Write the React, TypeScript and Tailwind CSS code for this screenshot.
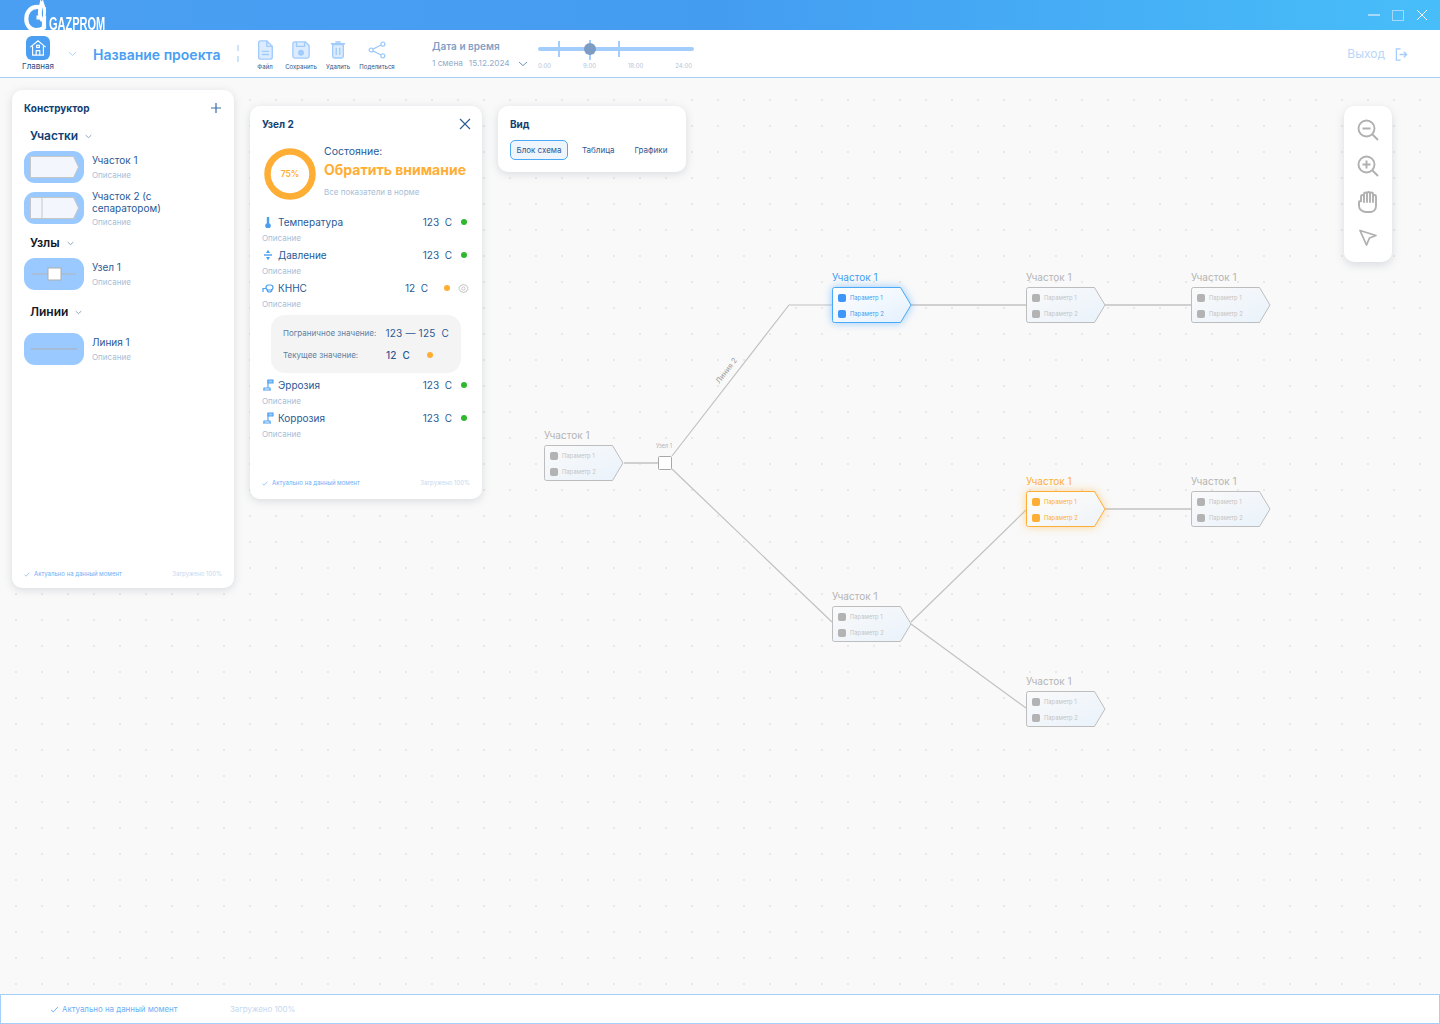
import React from "react";

const F = { fontFamily: "Inter, 'Noto Sans', sans-serif" };

function Chevron({ className = "" }: { className?: string }) {
  return (
    <svg viewBox="0 0 10 6" className={className} fill="none" stroke="currentColor" strokeWidth="1">
      <path d="M1 1l4 3.600L9 1" />
    </svg>
  );
}

function Check({ className = "" }: { className?: string }) {
  return (
    <svg viewBox="0 0 10 8" className={className} fill="none" stroke="currentColor" strokeWidth="1.100">
      <path d="M1 4.400l2.600 2.400L9 1" />
    </svg>
  );
}

function Logo() {
  return (
    <div className="flex items-start h-[30px] ml-6 w-[90px]">
      <svg viewBox="0 0 26 30" className="w-[26px] h-[30px] shrink-0">
        <path d="M21 9.500C18.500 7.500 16 6.800 13.500 6.800 6.500 6.800 2.300 12 2.300 19c0 6.500 4 11 9.700 11 3 0 6-.8 8-2.500V17.500h-7.500" fill="none" stroke="#fff" strokeWidth="4.200" />
        <path d="M17 22c-1.800-3-3.500-6-3-11 .3-4 1.800-7 2.300-11h.7c.3 1 .5 1.500.8 1.500.2 0 .4-.8.6-1.500h.7c.8 4 2.800 7 3 11 .2 5-2.500 8.500-5.100 11z" fill="#fff" />
        <path d="M18.600 18c-1-3-1-7-.2-11 .6 4 1 8 .2 11z" fill="#4a9ff0" />
      </svg>
      <span className="text-white font-bold text-[11px] leading-[8px] h-[8px] mt-[15.500px] -ml-[1px] origin-top-left scale-y-[1.750] whitespace-nowrap" style={{ fontFamily: "'Liberation Sans', sans-serif" }}>
        GAZPROM
      </span>
    </div>
  );
}

function TopBar() {
  return (
    <div className="h-[30px] shrink-0 flex items-start justify-between overflow-hidden bg-gradient-to-r from-[#4a9ff2] via-[#449cf1] to-[#47bef9]">
      <Logo />
      <div className="flex items-center h-[30px]">
        <div className="w-[12px] h-[1.500px] bg-[#a5d8fb] mr-[12px]" />
        <div className="w-[12px] h-[11px] border-[1.500px] border-[#a5d8fb] mr-[12px]" />
        <svg viewBox="0 0 12 12" className="w-[12px] h-[12px] mr-[12px]" stroke="#fff" strokeWidth="1" fill="none">
          <path d="M1 1l10 10M11 1L1 11" />
        </svg>
      </div>
    </div>
  );
}

function ToolIcon({ kind }: { kind: string }) {
  const c = "#a0cbfb";
  if (kind === "file")
    return (
      <svg viewBox="0 0 18 22" className="w-[18px] h-[20px]" fill="#dcecfe" stroke={c} strokeWidth="1.500">
        <path d="M2 3a2 2 0 0 1 2-2h7l6 6v12a2 2 0 0 1-2 2H4a2 2 0 0 1-2-2z" />
        <path d="M11 1v6h6M5.500 12.500h8M5.500 16h8" fill="none" />
      </svg>
    );
  if (kind === "save")
    return (
      <svg viewBox="0 0 20 20" className="w-[18px] h-[18px]" fill="#dcecfe" stroke={c} strokeWidth="1.500">
        <path d="M1 3a2 2 0 0 1 2-2h12l4 4v12a2 2 0 0 1-2 2H3a2 2 0 0 1-2-2z" />
        <path d="M5 1v5h9V1" fill="none" />
        <circle cx="10" cy="13" r="2.500" fill={c} />
      </svg>
    );
  if (kind === "del")
    return (
      <svg viewBox="0 0 18 20" className="w-[16px] h-[18px]" fill="#dcecfe" stroke={c} strokeWidth="1.500">
        <path d="M3 4h12v13a2 2 0 0 1-2 2H5a2 2 0 0 1-2-2z" />
        <path d="M1 3h16M6 1h6M7 7.500v8M11 7.500v8" fill="none" />
      </svg>
    );
  return (
    <svg viewBox="0 0 20 20" className="w-[18px] h-[18px]" fill="none" stroke={c} strokeWidth="1.400">
      <circle cx="16.500" cy="3.500" r="2.200" />
      <circle cx="3.500" cy="10" r="2.200" />
      <circle cx="16.500" cy="16.500" r="2.200" />
      <path d="M5.500 9l9-4.500M5.500 11l9 4.500" />
    </svg>
  );
}

function Tool({ kind, label, w }: { kind: string; label: string; w: string }) {
  return (
    <div className={`flex flex-col items-center ${w}`}>
      <div className="h-[22px] flex items-center justify-center">
        <ToolIcon kind={kind} />
      </div>
      <span className="text-[6px] leading-[8px] mt-[2px] text-[#2c5687] whitespace-nowrap">{label}</span>
    </div>
  );
}

function Slider() {
  return (
    <div className="ml-[9px] w-[156px] mt-[11px]">
      <div className="relative h-[16px]">
        <div className="absolute left-0 right-0 top-[6px] h-[4px] rounded-full bg-[#a3cdfc]" />
        <div className="absolute left-[20px] top-0 w-[2px] h-[16px] bg-[#a3cdfc]" />
        <div className="absolute left-[80px] top-0 w-[2px] h-[16px] bg-[#a3cdfc]" />
        <div className="absolute left-[51px] top-[-1px] w-[2px] h-[20px] bg-[#a3cdfc]" />
        <div className="absolute left-[46px] top-[2px] w-[12px] h-[12px] rounded-full bg-[#7c9cc4]" />
      </div>
      <div className="flex justify-between w-[154px] mt-[5px] text-[6px] leading-[8px] text-[#b3c6dc]">
        <span>0:00</span>
        <span>9:00</span>
        <span>18:00</span>
        <span>24:00</span>
      </div>
    </div>
  );
}

function Toolbar() {
  return (
    <div className="h-[48px] shrink-0 flex items-start bg-white border-b border-[#a8d0f5] relative">
      <div className="ml-[20px] w-[36px] flex flex-col items-center mt-[6px]">
        <div className="w-[24px] h-[24px] rounded-[6px] bg-[#4a9ff2] flex items-center justify-center">
          <svg viewBox="0 0 20 20" className="w-[18px] h-[18px]" fill="none" stroke="#fff" strokeWidth="1.300">
            <path d="M1.500 9L10 2l8.500 7M4 8v10h12V8M8 18v-5h4v5" />
            <rect x="8.500" y="7" width="3" height="2.500" />
          </svg>
        </div>
        <span className="text-[8px] leading-[9px] mt-[2px] text-[#1f4e86] whitespace-nowrap">Главная</span>
      </div>
      <Chevron className="w-[9px] h-[6px] ml-[12px] mt-[21px] text-[#a3cdfc] shrink-0" />
      <span className="ml-[16px] mt-[16px] text-[14px] leading-[18px] font-semibold text-[#4a9ff2] whitespace-nowrap w-[129px]">Название проекта</span>
      <div className="ml-[15px] mt-[15px] h-[17px] border-l-2 border-dashed border-[#cfe3fb]" />
      <div className="flex ml-[8px] mt-[9px]">
        <Tool kind="file" label="Файл" w="w-[36px]" />
        <Tool kind="save" label="Сохранить" w="w-[36px]" />
        <Tool kind="del" label="Удалить" w="w-[38px]" />
        <Tool kind="share" label="Поделиться" w="w-[40px]" />
      </div>
      <div className="ml-[35px] mt-[10px] w-[97px]">
        <div className="text-[10px] leading-[12px] font-semibold text-[#7f9fc6] whitespace-nowrap">Дата и время</div>
        <div className="flex items-center mt-[6px] text-[8.200px] leading-[11px] text-[#8fadcd] whitespace-nowrap">
          <span>1 смена</span>
          <span className="ml-[6px]">15.12.2024</span>
          <Chevron className="w-[10px] h-[6px] ml-[8px] text-[#6f93bd] shrink-0" />
        </div>
      </div>
      <Slider />
      <div className="ml-auto mr-[32px] mt-[16px] flex items-center">
        <span className="text-[12px] leading-[16px] text-[#b8d6f8]">Выход</span>
        <svg viewBox="0 0 14 14" className="w-[13px] h-[13px] ml-[10px]" fill="none" stroke="#a3cdfc" strokeWidth="1.400">
          <path d="M6 1H1.500v12H6M5 7h7.500M9.500 4l3 3-3 3" />
        </svg>
      </div>
    </div>
  );
}

function Thumb({ kind }: { kind: string }) {
  return (
    <div className="w-[60px] h-[32px] shrink-0 rounded-[11px] bg-[#99c9ff] flex items-center justify-center">
      <svg viewBox="0 0 60 32" className="w-[60px] h-[32px]">
        {(kind === "a" || kind === "b") && (
          <>
            <path d="M6.500 5.500h43l5 10.500-5 10.500h-43z" fill="#f3f7fd" stroke="#c7c7c7" />
            {kind === "b" && <path d="M18 5.500v21" stroke="#c7c7c7" />}
          </>
        )}
        {kind === "n" && (
          <>
            <path d="M8 16h44" stroke="#b5b5b5" />
            <rect x="24" y="10" width="13" height="12" fill="#fff" stroke="#adadad" />
          </>
        )}
        {kind === "l" && <path d="M7 16h46" stroke="#b0b0b0" strokeWidth="1.200" />}
      </svg>
    </div>
  );
}

function Group({ title, children, cls, black }: { title: string; children: React.ReactNode; cls: string; black?: boolean }) {
  return (
    <div className={cls}>
      <div className="flex items-center pl-[6px] h-[16px]">
        <span className={`text-[12px] font-semibold leading-[16px] ${black ? "text-[#111827]" : "text-[#123f73]"}`}>{title}</span>
        <Chevron className="w-[7px] h-[5px] ml-[7px] text-[#5f83ad]" />
      </div>
      {children}
    </div>
  );
}

function Item({ kind, title, cls = "", textCls = "pt-[3px]", descCls = "mt-[4px]" }: { kind: string; title: React.ReactNode; cls?: string; textCls?: string; descCls?: string }) {
  return (
    <div className={`flex ${cls}`}>
      <Thumb kind={kind} />
      <div className={`ml-[8px] ${textCls}`}>
        <div className="text-[10px] leading-[12px] text-[#2a5a96]">{title}</div>
        <div className={`text-[8px] leading-[10px] ${descCls} text-[#a8bdd8]`}>Описание</div>
      </div>
    </div>
  );
}

function PanelFooter() {
  return (
    <div className="flex items-center justify-between text-[6px] leading-[8px]">
      <div className="flex items-center text-[#6cb0f8]">
        <Check className="w-[6px] h-[5px] mr-[4px]" />
        Актуально на данный момент
      </div>
      <span className="text-[#c6d8ee]">Загружено 100%</span>
    </div>
  );
}

function Constructor() {
  return (
    <div className="w-[222px] h-[498px] shrink-0 mt-[12px] rounded-[10px] bg-white shadow-[0_2px_8px_rgba(120,130,150,0.25)] px-[12px] relative flex flex-col">
      <div className="flex items-center justify-between h-[16px] mt-[10px]">
        <span className="text-[10px] font-bold text-[#123f73]">Конструктор</span>
        <svg viewBox="0 0 10 10" className="w-[10px] h-[10px] mr-[1px]" stroke="#3a6ba5" strokeWidth="1.200">
          <path d="M5 0v10M0 5h10" />
        </svg>
      </div>
      <Group title="Участки" cls="mt-[12px]">
        <Item kind="a" title="Участок 1" cls="mt-[7px]" />
        <Item kind="b" title={<>Участок 2 (с<br />сепаратором)</>} cls="mt-[9px]" textCls="-mt-[2px]" descCls="mt-[3px]" />
      </Group>
      <Group title="Узлы" cls="mt-[8px]" black>
        <Item kind="n" title="Узел 1" cls="mt-[7px]" />
      </Group>
      <Group title="Линии" cls="mt-[14px]" black>
        <Item kind="l" title="Линия 1" cls="mt-[13px]" />
      </Group>
      <div className="mt-auto mb-[10px]">
        <PanelFooter />
      </div>
    </div>
  );
}

function RowIcon({ kind }: { kind: string }) {
  if (kind === "t")
    return (
      <svg viewBox="0 0 10 12" className="w-[10px] h-[12px]">
        <path d="M3.800 1h2.400v6.200a2.800 2.800 0 1 1-2.400 0z" fill="#4a9ff2" />
      </svg>
    );
  if (kind === "p")
    return (
      <svg viewBox="0 0 10 12" className="w-[10px] h-[12px]" fill="#4a9ff2">
        <rect x="1" y="5.300" width="8" height="1.400" />
        <path d="M5 .8L7 4H3zM5 11.200L3 8h4z" />
      </svg>
    );
  if (kind === "k")
    return (
      <svg viewBox="0 0 12 10" className="w-[12px] h-[10px]" fill="none" stroke="#4a9ff2" strokeWidth="1.200">
        <path d="M1 9V5.500h3M5 6.500a2.500 2.500 0 1 0 5 0" />
        <rect x="4" y="2" width="7" height="5" rx="2.500" />
      </svg>
    );
  return (
    <svg viewBox="0 0 12 12" className="w-[12px] h-[12px]" fill="none" stroke="#4a9ff2" strokeWidth="1.100">
      <path d="M6 1v8" />
      <path d="M6 1h5v3H6z" fill="#9dcafb" />
      <path d="M1 11h8M2 9h6v2H2z" />
    </svg>
  );
}

function Row({ icon, name, val, dot, gear }: { icon: string; name: string; val: string; dot: string; gear?: boolean }) {
  return (
    <div className="h-[33px]">
      <div className="flex items-center h-[14px]">
        <div className="w-[12px] flex justify-center shrink-0">
          <RowIcon kind={icon} />
        </div>
        <span className="ml-[4px] text-[10px] leading-[14px] text-[#2a5a96]">{name}</span>
        <span className={`ml-auto text-[10px] leading-[14px] text-[#2a5a96] whitespace-pre ${gear ? "mr-[16px]" : "mr-[9px]"}`}>{val}</span>
        <div className={`w-[6px] h-[6px] rounded-full ${dot} ${gear ? "mr-[21px]" : "mr-[3px]"}`} />
        {gear && (
          <svg viewBox="0 0 12 12" className="w-[11px] h-[11px] -ml-[13px] mr-[1px] shrink-0" fill="none" stroke="#b5b5b5" strokeWidth="0.800">
            <circle cx="6" cy="6" r="1.800" />
            <path d="M6 1l1 1.400 1.800-.2.600 1.700 1.600.8-.5 1.300.5 1.300-1.600.8-.6 1.700-1.800-.2L6 11l-1-1.400-1.800.2-.6-1.700L1 7.300 1.500 6 1 4.700l1.600-.8.600-1.700 1.800.2z" />
          </svg>
        )}
      </div>
      <div className="text-[8px] leading-[10px] mt-[4px] text-[#a8bdd8]">Описание</div>
    </div>
  );
}

function NodePanel() {
  return (
    <div className="w-[232px] h-[393px] shrink-0 mt-[28px] ml-[16px] rounded-[10px] bg-white shadow-[0_2px_8px_rgba(120,130,150,0.25)] px-[12px] flex flex-col">
      <div className="flex items-center justify-between mt-[11px] h-[14px]">
        <span className="text-[10px] font-bold text-[#123f73]">Узел 2</span>
        <svg viewBox="0 0 12 12" className="w-[12px] h-[12px] mr-[-1px]" stroke="#2a5a96" strokeWidth="1.100">
          <path d="M1 1l10 10M11 1L1 11" />
        </svg>
      </div>
      <div className="flex mt-[8px] h-[60px]">
        <div className="relative w-[52px] h-[52px] mt-[9px] ml-[2px] shrink-0 flex items-center justify-center">
          <svg viewBox="0 0 52 52" className="w-[52px] h-[52px]">
            <circle cx="26" cy="26" r="22.500" fill="none" stroke="#ffae35" strokeWidth="6.500" />
          </svg>
          <span className="absolute text-[8.500px] font-semibold text-[#ffae35]">75%</span>
        </div>
        <div className="ml-[8px] pt-[6px]">
          <div className="text-[10.500px] leading-[13px] text-[#2a5a96]">Состояние:</div>
          <div className="text-[14px] leading-[17px] mt-[3px] font-bold text-[#ffae35] whitespace-nowrap">Обратить внимание</div>
          <div className="text-[8px] leading-[10px] mt-[9px] text-[#a8bdd8] whitespace-nowrap">Все показатели в норме</div>
        </div>
      </div>
      <div className="mt-[16px]">
        <Row icon="t" name="Температура" val="123  С" dot="bg-[#2eb82e]" />
        <Row icon="p" name="Давление" val="123  С" dot="bg-[#2eb82e]" />
        <Row icon="k" name="КННС" val="12  С" dot="bg-[#ffae35]" gear />
      </div>
      <div className="ml-[9px] w-[190px] h-[58px] mt-[1px] rounded-[14px] bg-[#f4f4f4] pl-[12px] pr-[12px] py-[11px] text-[8px] text-[#5f7f9f]">
        <div className="flex items-center h-[14px]">
          <span className="w-[104px] whitespace-nowrap">Пограничное значение:</span>
          <span className="text-[10px] text-[#2a5a96] whitespace-pre tracking-[0.2px]">123 — 125  С</span>
        </div>
        <div className="flex items-center h-[14px] mt-[8px]">
          <span className="w-[103px] whitespace-nowrap">Текущее значение:</span>
          <span className="text-[10px] text-[#2a5a96] font-medium whitespace-pre tracking-[0.2px]">12  С</span>
          <div className="ml-[17px] w-[6px] h-[6px] rounded-full bg-[#ffae35]" />
        </div>
      </div>
      <div className="mt-[5px]">
        <Row icon="e" name="Эррозия" val="123  С" dot="bg-[#2eb82e]" />
        <Row icon="e" name="Коррозия" val="123  С" dot="bg-[#2eb82e]" />
      </div>
      <div className="mt-auto mb-[12px]">
        <PanelFooter />
      </div>
    </div>
  );
}

function ViewPanel() {
  return (
    <div className="w-[188px] h-[66px] shrink-0 mt-[28px] ml-[16px] rounded-[10px] bg-white shadow-[0_2px_8px_rgba(120,130,150,0.25)] px-[12px] pt-[11px]">
      <div className="text-[10px] leading-[14px] font-bold text-[#123f73]">Вид</div>
      <div className="flex items-center mt-[9px] text-[8px] text-[#2a5a96]">
        <div className="w-[58px] h-[20px] rounded-[5px] border border-[#4aa8f5] bg-[#eef5fd] flex items-center justify-center">Блок схема</div>
        <span className="ml-[14px]">Таблица</span>
        <span className="ml-[20px]">Графики</span>
      </div>
    </div>
  );
}

function ZoomPanel() {
  const s = "#b0b0b0";
  return (
    <div className="absolute right-[48px] top-[28px] w-[48px] h-[156px] rounded-[10px] bg-white shadow-[0_3px_8px_rgba(120,130,150,0.25)] flex flex-col items-center pt-[13px] gap-[14px]">
      <svg viewBox="0 0 22 22" className="w-[22px] h-[22px]" fill="none" stroke={s} strokeWidth="1.900">
        <circle cx="9.500" cy="9.500" r="8" />
        <path d="M15.500 15.500l5.500 5.500M5.500 9.500h8" />
      </svg>
      <svg viewBox="0 0 22 22" className="w-[22px] h-[22px]" fill="none" stroke={s} strokeWidth="1.900">
        <circle cx="9.500" cy="9.500" r="8" />
        <path d="M15.500 15.500l5.500 5.500M5.500 9.500h8M9.500 5.500v8" />
      </svg>
      <svg viewBox="0 0 22 22" className="w-[22px] h-[22px]" fill="none" stroke={s} strokeWidth="1.900" strokeLinecap="round">
        <path d="M4 11V5.500a1.500 1.500 0 0 1 3 0V3a1.500 1.500 0 0 1 3 0v-.500a1.500 1.500 0 0 1 3 0V3a1.500 1.500 0 0 1 3 0v2.500a1.500 1.500 0 0 1 3 0V15c0 3.500-2.500 6-6 6H9c-3.500 0-7-2.500-7-6v-3.500a1 1 0 0 1 2-.5zM7 5.500V11M10 3v8M13 2.500V11M16 4v7" />
      </svg>
      <svg viewBox="0 0 20 20" className="w-[20px] h-[20px] mt-[1px]" fill="none" stroke={s} strokeWidth="1.800" strokeLinejoin="round">
        <path d="M2 2.500l16 5-6.500 2.500-3 7z" />
      </svg>
    </div>
  );
}

type N = { x: number; y: number; tone: "g" | "b" | "o" };
const nodes: N[] = [
  { x: 544, y: 367, tone: "g" },
  { x: 832, y: 209, tone: "b" },
  { x: 1026, y: 209, tone: "g" },
  { x: 1191, y: 209, tone: "g" },
  { x: 1026, y: 413, tone: "o" },
  { x: 1191, y: 413, tone: "g" },
  { x: 832, y: 528, tone: "g" },
  { x: 1026, y: 613, tone: "g" },
];

const toneMap = {
  g: { label: "text-[#b5b5b5]", param: "text-[#c4c4c4]", sq: "bg-[#b3b3b3]", stroke: "#bdbdbd", glow: "", grad: "gg" },
  b: { label: "text-[#3f9cf5]", param: "text-[#3f9cf5]", sq: "bg-[#3f96fa]", stroke: "#48aaf8", glow: "drop-shadow-[0_0_4px_rgba(70,160,250,0.55)]", grad: "gb" },
  o: { label: "text-[#ffae35]", param: "text-[#ffae35]", sq: "bg-[#ffae35]", stroke: "#ffae35", glow: "drop-shadow-[0_0_4px_rgba(255,175,60,0.5)]", grad: "go" },
};

function SectionNode({ x, y, tone }: N) {
  const t = toneMap[tone];
  return (
    <div className="absolute w-[80px]" style={{ left: x, top: y - 16 }}>
      <div className={`text-[10px] leading-[13px] ${t.label}`}>Участок 1</div>
      <div className="relative w-[80px] h-[36px] mt-[3px]">
        <svg viewBox="0 0 80 36" className={`absolute inset-0 w-[80px] h-[36px] ${t.glow}`}>
          <path d="M.5 2.500a2 2 0 0 1 2-2h66l10.500 17.500L68.500 35.500h-66a2 2 0 0 1-2-2z" fill={`url(#${t.grad})`} stroke={t.stroke} />
        </svg>
        <div className="relative pl-[6px] pt-[7px] flex flex-col gap-[8px]">
          {["Параметр 1", "Параметр 2"].map((p) => (
            <div key={p} className="flex items-center h-[8px]">
              <div className={`w-[8px] h-[8px] rounded-[2px] ${t.sq}`} />
              <span className={`ml-[4px] text-[5.800px] leading-[8px] ${t.param}`}>{p}</span>
            </div>
          ))}
        </div>
      </div>
    </div>
  );
}

function Diagram() {
  const c = "#c2c2c2";
  return (
    <>
      <svg className="absolute left-0 top-0 w-[1440px] h-[916px]" viewBox="0 78 1440 916" fill="none">
        <defs>
          <linearGradient id="gg" x1="0" y1="0" x2="1" y2="1">
            <stop offset="0" stopColor="#fafafa" />
            <stop offset="1" stopColor="#e9f2fb" />
          </linearGradient>
          <linearGradient id="gb" x1="0" y1="0" x2="1" y2="1">
            <stop offset="0" stopColor="#ffffff" />
            <stop offset="1" stopColor="#e4f0fd" />
          </linearGradient>
          <linearGradient id="go" x1="0" y1="0" x2="1" y2="1">
            <stop offset="0" stopColor="#fffdf9" />
            <stop offset="1" stopColor="#eef3f8" />
          </linearGradient>
        </defs>
        <path d="M624 463h34M911 305h115M1105 305h86M1105 509h86" stroke={c} strokeWidth="1.500" />
        <path d="M672 456L789 305h43M672 469L832 622M911 622L1026 510M911 624L1026 708" stroke={c} strokeWidth="1.200" />
        <rect x="658.500" y="456.500" width="13" height="13" rx="1" fill="#fff" stroke="#a8a8a8" />
      </svg>
      {nodes.map((n, i) => (
        <SectionNode key={i} {...n} />
      ))}
      <span className="absolute left-[656px] top-[364px] text-[5.500px] leading-[8px] text-[#b5b5b5]">Узел 1</span>
      <span className="absolute left-[712px] top-[288px] text-[7.500px] leading-[10px] text-[#9a9a9a] -rotate-[52deg]">Линия 2</span>
    </>
  );
}

function BottomBar() {
  return (
    <div className="h-[30px] shrink-0 bg-white border border-[#a5cffb] flex items-center pl-[49px] text-[7.900px] leading-[10px]">
      <Check className="w-[9px] h-[7px] mr-[3px] text-[#6cb0f8]" />
      <span className="text-[#6cb0f8] w-[168px]">Актуально на данный момент</span>
      <span className="text-[#c6d8ee]">Загружено 100%</span>
    </div>
  );
}

export default function App() {
  return (
    <div className="w-[1440px] h-[1024px] flex flex-col overflow-hidden bg-[#f9f9f9]" style={F}>
      <TopBar />
      <Toolbar />
      <div className="relative flex-1 flex items-start pl-[12px] bg-[#f9f9f9] bg-[radial-gradient(#e8e8e8_0.8px,transparent_1px)] bg-[size:26px_26px] bg-[position:3px_9px]">
        <Diagram />
        <div className="relative flex items-start">
          <Constructor />
          <NodePanel />
          <ViewPanel />
        </div>
        <ZoomPanel />
      </div>
      <BottomBar />
    </div>
  );
}
